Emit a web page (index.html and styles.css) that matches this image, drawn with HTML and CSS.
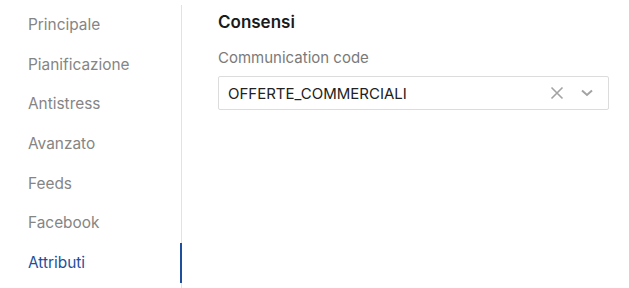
FILE: index.html
```html
<!DOCTYPE html>
<html lang="it">
<head>
  <meta charset="UTF-8">
  <title>Attributi</title>
  <link rel="stylesheet" href="styles.css">
</head>
<body>
  <div class="layout">
    <nav class="side-nav">
      <a class="nav-item">Principale</a>
      <a class="nav-item">Pianificazione</a>
      <a class="nav-item">Antistress</a>
      <a class="nav-item">Avanzato</a>
      <a class="nav-item">Feeds</a>
      <a class="nav-item">Facebook</a>
      <a class="nav-item active">Attributi</a>
    </nav>
    <main class="content">
      <h2 class="section-title">Consensi</h2>
      <label class="field-label">Communication code</label>
      <div class="select-box">
        <span class="select-value">OFFERTE_COMMERCIALI</span>
        <span class="select-clear">
          <svg width="14" height="14" viewBox="0 0 14 14"><path d="M1.5 1.5l11 11M12.5 1.5l-11 11" stroke="#a3a3a3" stroke-width="1.6" fill="none"/></svg>
        </span>
        <span class="select-arrow">
          <svg width="14" height="14" viewBox="0 0 14 14"><path d="M2 4.5l5 4.5 5-4.5" stroke="#a3a3a3" stroke-width="2" fill="none"/></svg>
        </span>
      </div>
    </main>
  </div>
</body>
</html>
```
FILE: styles.css
```css
* { margin: 0; padding: 0; box-sizing: border-box; }
body {
  font-family: Inter, "Noto Sans", sans-serif;
  background: white;
  color: #1f1f1f;
}
.layout { display: flex; height: 288px; }
.side-nav {
  width: 182px;
  margin-top: 5px;
  border-right: 1px solid #e2e2e2;
  display: flex; flex-direction: column;
}
.nav-item {
  display: block;
  height: 39.7px;
  line-height: 39.7px;
  padding-left: 28px;
  font-size: 15.4px;
  color: #858585;
  margin-right: -1px;
  border-right: 2px solid transparent;
}
.nav-item.active { color: #1d4f9c; border-right-color: #1d4f9c; }
.content { flex: 1; padding: 11px 20px 0 36px; }
.section-title { font-size: 17px; font-weight: 600; line-height: 22px; color: #1a1a1a; }
.field-label {
  display: block;
  margin-top: 16px;
  font-size: 15px; line-height: 18px;
  color: #7a7a7a;
}
.select-box {
  margin-top: 9px;
  width: 391px; height: 34px;
  border: 1px solid #dcdcdc;
  border-radius: 2px;
  display: flex; align-items: center;
  padding: 0 14px 0 9px;
}
.select-value { flex: 1; font-size: 15px; color: #222; }
.select-clear, .select-arrow { display: flex; }
.select-arrow { margin-left: 16px; }
```
